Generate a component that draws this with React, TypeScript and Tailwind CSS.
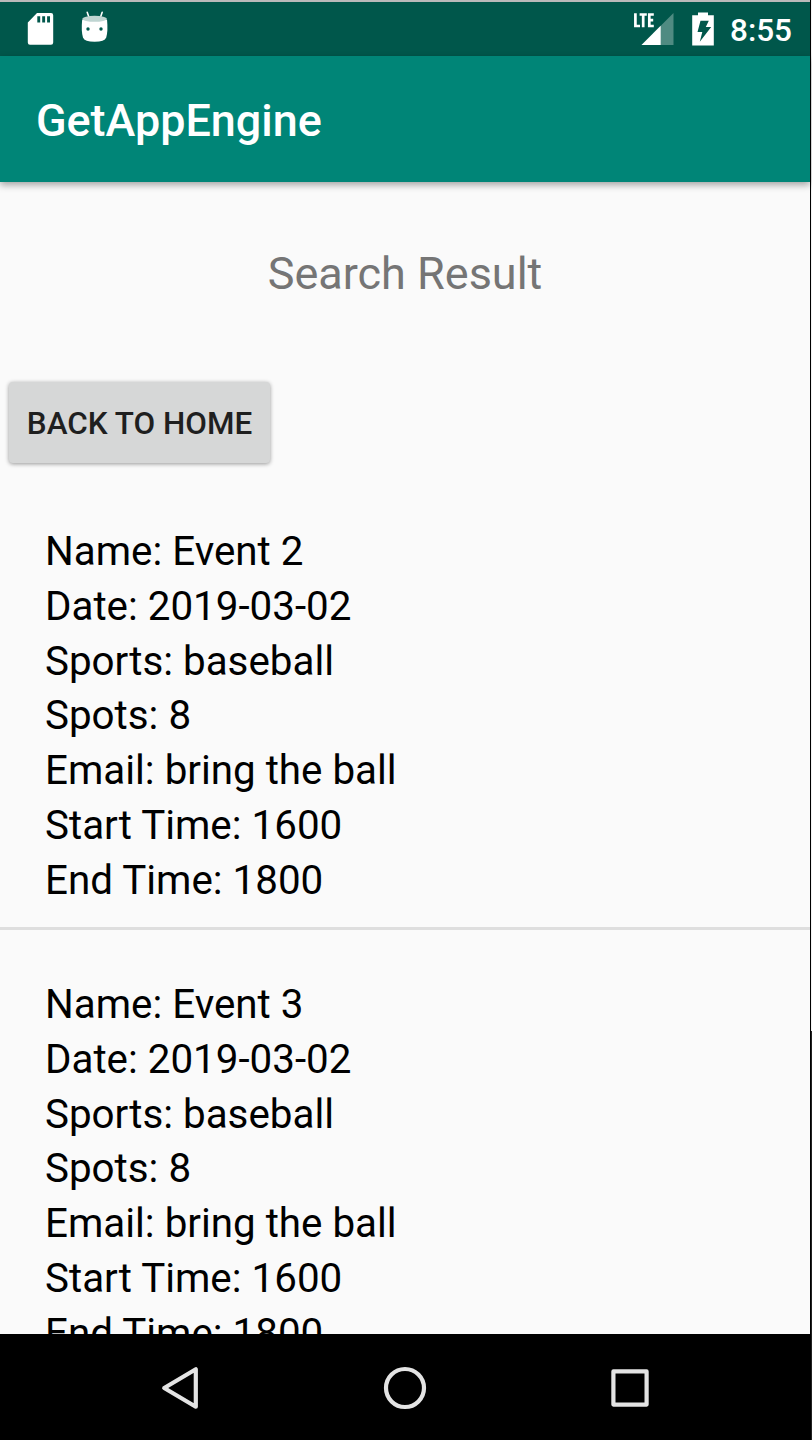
import React from "react";

const events = [
  { name: "Event 2", date: "2019-03-02", sports: "baseball", spots: 8, email: "bring the ball", start: "1600", end: "1800" },
  { name: "Event 3", date: "2019-03-02", sports: "baseball", spots: 8, email: "bring the ball", start: "1600", end: "1800" },
];

function StatusBar() {
  return (
    <div className="flex h-[54px] shrink-0 items-center bg-[#00574b] pr-[18px] pl-[27px] text-white">
      <svg width="82" height="54" viewBox="0 2 82 54" className="block">
        <path
          fillRule="evenodd"
          fill="#fff"
          d="M10 13H24Q26.200 13 26.200 15.200V42.600Q26.200 44.800 24 44.800H3Q.8 44.800 .8 42.600V22.500ZM10.300 16.300V22.500H13.200V16.300ZM15.200 16.300V22.500H18.100V16.300ZM20.100 16.300V22.500H23V16.300Z"
        />
        <path d="M60.200 12.300L62.200 18M75.200 12.300L73.200 18" stroke="#fff" strokeWidth="1.600" strokeLinecap="round" />
        <path d="M55.200 19.500Q54 31 56 37.500Q57.600 41.800 67.600 41.800Q77.600 41.800 79.200 37.500Q81.200 31 80 19.500Z" fill="#fff" />
        <ellipse cx="67.600" cy="18.800" rx="12.200" ry="3" fill="#bfd5d2" />
        <circle cx="61" cy="29" r="1.700" fill="#00574b" />
        <circle cx="74" cy="29" r="1.700" fill="#00574b" />
      </svg>
      <div className="flex-1" />
      <svg width="84" height="54" viewBox="632 2 84 54" className="block">
        <path d="M673.500 13V45H641.500Z" fill="#4f8b82" />
        <path d="M660.700 25.800V45H641.500Z" fill="#fff" />
        <path d="M635.400 13.300V26H640M639.600 14.500H646.800M643.200 14.500V27.200M653.800 14.500H649.300V26H653.800M649.300 20.200H653.200" fill="none" stroke="#fff" strokeWidth="2.700" />
        <path
          fillRule="evenodd"
          fill="#fff"
          d="M698 12.600H708V15.300H713.800V45.500H692.200V15.300H698ZM700.500 20.700L697.500 32H702.300L699.800 41.800L711.200 27H705.800L708.800 20.700Z"
        />
      </svg>
      <span className="ml-[14px] w-[62px] pt-[4px] text-[31.500px] leading-[54px] font-medium whitespace-nowrap">8:55</span>
    </div>
  );
}

function Field({ label, value }: { label: string; value: string | number }) {
  return (
    <div className="whitespace-nowrap">
      {label}: {value}
    </div>
  );
}

function NavigationBar() {
  return (
    <div className="flex h-[106px] shrink-0 items-center bg-black pl-[160px]">
      <svg width="492" height="106" viewBox="160 1334 492 106" className="block" fill="none" stroke="#e4e4e4" strokeWidth="4.200" strokeLinejoin="round">
        <path d="M195.800 1369.300V1406.700L164.200 1388Z" />
        <circle cx="405" cy="1388" r="19" />
        <rect x="613.400" y="1371.400" width="33.200" height="33.200" />
      </svg>
    </div>
  );
}

export default function App() {
  return (
    <div className="flex h-[1440px] w-[812px] overflow-hidden bg-[#fafafa] font-[Roboto,sans-serif]">
      <div className="flex w-[810px] shrink-0 flex-col">
        <div className="h-[2px] shrink-0 bg-[#bababa]" />
        <StatusBar />
        <header className="relative z-10 flex h-[126px] shrink-0 items-center bg-[#008577] pt-[3px] pl-[36px] text-[44.900px] font-medium text-white shadow-[0_3px_7px_rgba(0,0,0,0.35)]">
          GetAppEngine
        </header>
        <main className="flex min-h-0 flex-1 flex-col overflow-hidden">
          <h1 className="mt-[65px] h-[54px] shrink-0 text-center text-[45px] leading-[54px] text-[#757575]">Search Result</h1>
          <button className="mt-[81px] ml-[9px] h-[81px] w-[261px] shrink-0 rounded-[4px] bg-[#d6d7d7] pt-[3px] text-[31.450px] font-medium whitespace-nowrap text-[#1f1f1f] shadow-[0_1px_4px_rgba(0,0,0,0.4)]">
            BACK TO HOME
          </button>
          <div className="mt-[14px] shrink-0">
            {events.map((event) => (
              <section key={event.name} className="h-[453px] border-b-[3px] border-[#dedede] pt-[48px] pl-[45px] text-[40.350px] leading-[54.750px] text-black">
                <Field label="Name" value={event.name} />
                <Field label="Date" value={event.date} />
                <Field label="Sports" value={event.sports} />
                <Field label="Spots" value={event.spots} />
                <Field label="Email" value={event.email} />
                <Field label="Start Time" value={event.start} />
                <Field label="End Time" value={event.end} />
              </section>
            ))}
          </div>
        </main>
        <NavigationBar />
      </div>
      <div className="w-px shrink-0 bg-black" />
      <div className="flex w-px shrink-0 flex-col">
        <div className="h-[1031px] bg-[#f2f2f2]" />
        <div className="flex-1 bg-[#222222]" />
      </div>
    </div>
  );
}
